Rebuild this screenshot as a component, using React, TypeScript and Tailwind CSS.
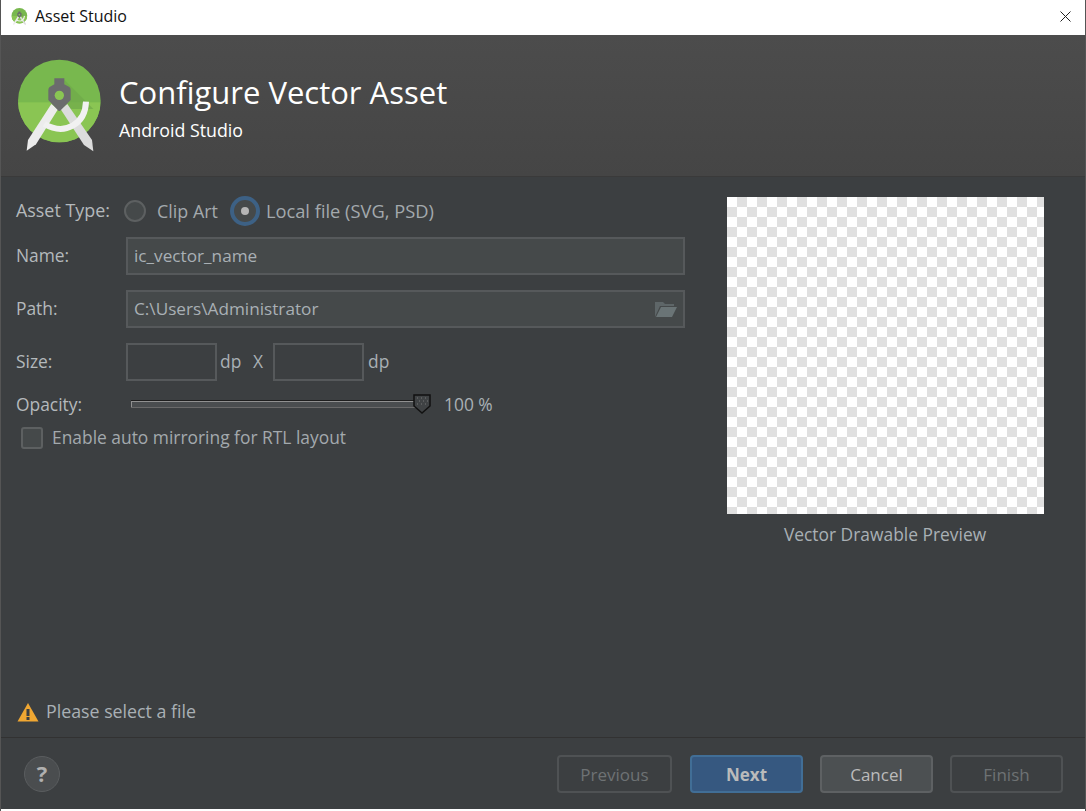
const font = { fontFamily: '"Open Sans", "Noto Sans", sans-serif' };

function Logo({ className }: { className: string }) {
  return (
    <svg viewBox="0 0 300 330" className={className}>
      <defs>
        <clipPath id="c"><circle cx="148" cy="153" r="124" /></clipPath>
      </defs>
      <circle cx="148" cy="153" r="124" fill="#78b84e" />
      <rect x="24" y="157" width="248" height="124" fill="#8ac553" clipPath="url(#c)" />
      <path d="M163 90 L250 177 L170 177 Z" fill="#6fa84a" opacity="0.7" clipPath="url(#c)" />
      <path d="M124 162 L144 178 L78 283 L50 302 L54 270 Z" fill="#ececec" />
      <path d="M172 162 L152 178 L222 285 L250 304 L246 270 Z" fill="#dcdcdc" />
      <path d="M103 222 C 165 258 226 222 228 155" fill="none" stroke="#f1f1f1" strokeWidth="18" />
      <path d="M133 85 H163 V103 L178 111 Q182 114 182 120 V150 L150 183 H146 L115 150 V120 Q115 114 119 111 L133 103 Z" fill="#6b6b6d" />
      <circle cx="148" cy="136" r="14" fill="#8ac553" />
    </svg>
  );
}

function Field({ children, className }: { children?: React.ReactNode; className: string }) {
  return (
    <div className={`h-[38px] border-2 border-[#56595b] bg-[#45494a] flex items-center pl-[6px] pr-[5px] text-[17.2px] text-[#a9b0b5] ${className}`}>
      {children}
    </div>
  );
}

function Label({ children, className = "" }: { children: React.ReactNode; className?: string }) {
  return <div className={`w-[110px] shrink-0 text-[#b4b9bc] ${className}`}>{children}</div>;
}

function Btn({ children, className }: { children: React.ReactNode; className: string }) {
  return (
    <div className={`h-[38px] w-[113px] rounded-[4px] border-2 pt-[2px] flex items-center justify-center text-[17px] ${className}`}>
      {children}
    </div>
  );
}

export default function App() {
  return (
    <div style={font} className="w-[1086px] h-[811px] flex flex-col bg-white border-l border-l-[#555] border-r border-r-[#555] overflow-hidden">
      <div className="h-[35px] shrink-0 bg-white flex items-center pl-[9px] pr-[14px] pb-[3px] text-[16px] text-[#111]">
        <Logo className="w-[19px] h-[21px]" />
        <span className="ml-[6px]">Asset Studio</span>
        <svg viewBox="0 0 11 11" className="ml-auto w-[11px] h-[11px]">
          <path d="M.5.5l10 10M10.5.5l-10 10" stroke="#222" strokeWidth="1" />
        </svg>
      </div>
      <div className="h-[142px] shrink-0 bg-gradient-to-b from-[#4c4c4c] to-[#454545] flex items-start pl-[9px] pt-[15px] border-b border-[#3a3a3a]">
        <Logo className="w-[100px] h-[110px]" />
        <div className="ml-[9px] mt-[17px] text-white">
          <div className="text-[31px] leading-[50px]">Configure Vector Asset</div>
          <div className="text-[17.8px] leading-[26px]">Android Studio</div>
        </div>
      </div>
      <div className="flex-1 bg-[#3c3f41] flex pl-[15px] text-[17.4px] text-[#a9b0b5]">
        <div className="w-[669px] shrink-0 pt-[15px] flex flex-col">
          <div className="h-[38px] flex items-center text-[17.9px]">
            <Label className="pb-[2px]">Asset Type:</Label>
            <div className="w-[22px] h-[22px] rounded-full border-2 border-[#5d6061] bg-[#45494a] ml-[-2px]" />
            <span className="ml-[11px] text-[#a3a9ad]">Clip Art</span>
            <div className="ml-[12px] w-[30px] h-[30px] rounded-full border-[4px] border-[#3d6185] bg-[#45494a] flex items-center justify-center">
              <div className="w-[8px] h-[8px] rounded-full bg-[#b5b5b5]" />
            </div>
            <span className="ml-[6px] text-[18.3px] text-[#a3a9ad]">Local file (SVG, PSD)</span>
          </div>
          <div className="mt-[7px] flex items-center">
            <Label className="pb-[1px]">Name:</Label>
            <Field className="w-[559px] pb-[1px]">ic_vector_name</Field>
          </div>
          <div className="mt-[15px] flex items-center">
            <Label className="pb-[1px]">Path:</Label>
            <Field className="w-[559px] justify-between">
              <span className="pb-[1px]">C:\Users\Administrator</span>
              <svg viewBox="0 0 24 17" className="w-[24px] h-[17px]">
                <path d="M1 16V1h8l2 2h9v2H6L1 16z" fill="#5e6668" />
                <path d="M7 6h16l-5 10H2z" fill="#6a7476" />
              </svg>
            </Field>
          </div>
          <div className="mt-[15px] flex items-center">
            <Label className="pb-[1px]">Size:</Label>
            <div className="w-[91px] h-[38px] border-2 border-[#56595b] bg-[#3c3f41]" />
            <span className="ml-[3px] w-[23px] pb-[1px]">dp</span>
            <span className="ml-[10px] w-[12px] pb-[1px]">X</span>
            <div className="ml-[8px] w-[91px] h-[38px] border-2 border-[#56595b] bg-[#3c3f41]" />
            <span className="ml-[4px] pb-[1px]">dp</span>
          </div>
          <div className="mt-[10px] h-[24px] flex items-center">
            <Label className="pt-[2px]">Opacity:</Label>
            <div className="relative ml-[5px] w-[290px] border-t border-[#1e1e1e] shadow-[0_1px_0_#6a6a6a]">
              <div className="h-[6px] border-t border-l border-[#909090] bg-[#4a4d4f]" />
              <svg viewBox="0 0 18 20" className="absolute right-[-10px] top-[-7px] w-[18px] h-[20px]">
                <path d="M1 1H17V12L9 19L1 12Z" fill="#3f4244" stroke="#111" strokeWidth="1.5" />
                <path d="M4 4h1M8 4h1M12 4h1M6 7h1M10 7h1M14 7h1M4 10h1M8 10h1M12 10h1" stroke="#777" strokeWidth="1" />
              </svg>
            </div>
            <span className="ml-[23px] mt-[3px]">100 %</span>
          </div>
          <div className="mt-[9px] flex items-center pl-[5px]">
            <div className="w-[22px] h-[22px] rounded-[3px] border-2 border-[#5d6061] bg-[#45494a]" />
            <span className="ml-[9px] pb-[2px] text-[#a3a9ad]">Enable auto mirroring for RTL layout</span>
          </div>
          <div className="mt-auto mb-[12px] flex items-center pl-[1px]">
            <svg viewBox="0 0 22 20" className="w-[22px] h-[20px]">
              <path d="M11 1L21.5 19.5H.5Z" fill="#f0a732" />
              <rect x="9.5" y="7" width="3" height="7" fill="#3c3f41" />
              <rect x="9.5" y="15" width="3" height="3" fill="#3c3f41" />
            </svg>
            <span className="ml-[7px] text-[17.8px]">Please select a file</span>
          </div>
        </div>
        <div className="pt-[20px] flex-1 flex flex-col items-center">
          <div className="w-[317px] h-[317px] bg-[conic-gradient(#e0e0e0_25%,#ffffff_0_50%,#e0e0e0_0_75%,#ffffff_0)] bg-[length:20px_20px]" />
          <div className="mt-[7px] text-[#a9b0b5]">Vector Drawable Preview</div>
        </div>
      </div>
      <div className="h-[72px] shrink-0 bg-[#3c3f41] border-t border-[#323232] flex items-center pl-[23px] pr-[22px] mb-[2px]">
        <div className="w-[36px] h-[36px] rounded-full bg-[#4a4d4f] border border-[#5a5d5f] flex items-center justify-center text-[#b0b0b0] font-bold text-[22px]">?</div>
        <div className="ml-auto flex gap-[17px]">
          <Btn className="w-[115px] mr-[1px] border-[#4f5254] text-[#6e7274]">Previous</Btn>
          <Btn className="border-[#416e96] bg-[#365880] text-[#bbbbbb] font-bold">Next</Btn>
          <Btn className="border-[#5e6163] bg-[#4c5052] text-[#bbbbbb]">Cancel</Btn>
          <Btn className="border-[#4f5254] text-[#6e7274]">Finish</Btn>
        </div>
      </div>
    </div>
  );
}
